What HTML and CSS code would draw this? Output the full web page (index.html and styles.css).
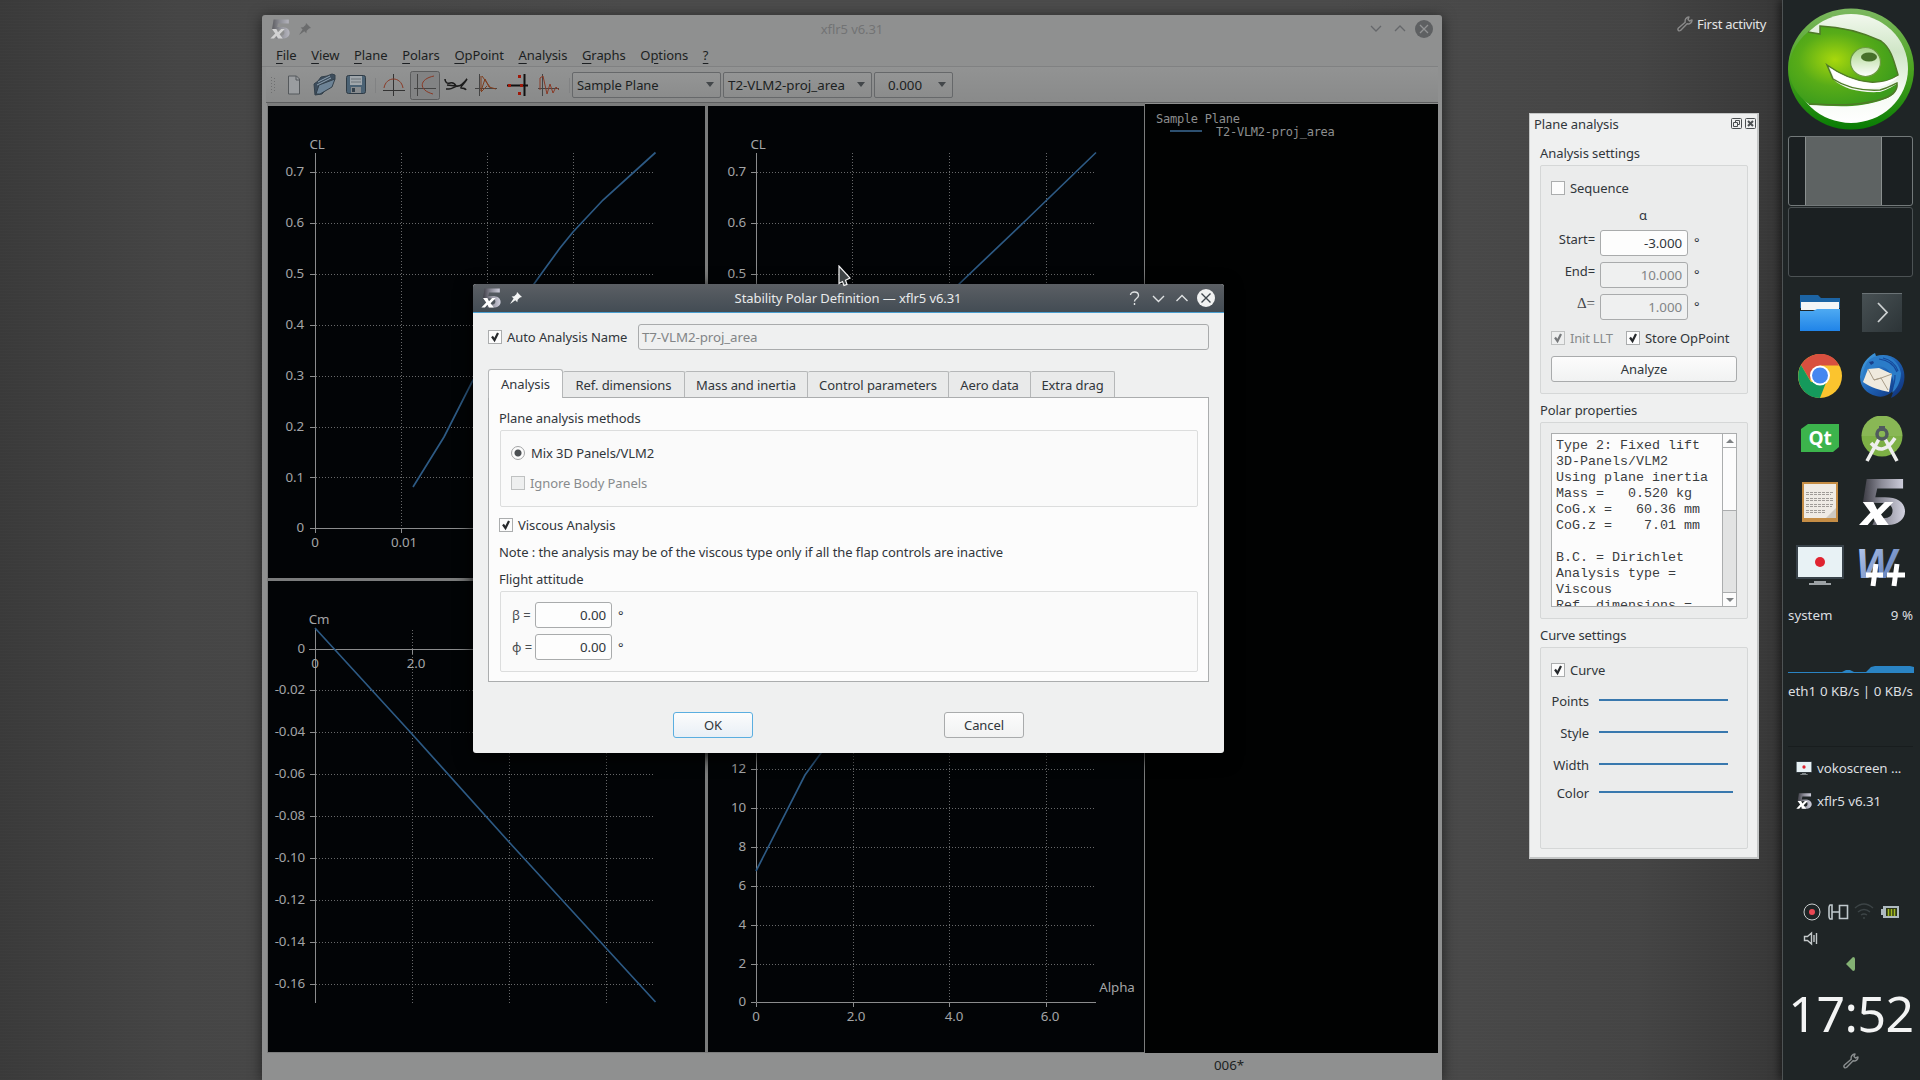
FILE: index.html
```html
<!DOCTYPE html>
<html lang="en">
<head>
<meta charset="utf-8">
<title>xflr5 v6.31</title>
<link rel="stylesheet" href="styles.css">
</head>
<body>
<svg class="defs" aria-hidden="true">
  <defs>
    <linearGradient id="g5" x1="0" y1="0" x2="1" y2="0"><stop offset="0" stop-color="#3c3c44"/><stop offset=".45" stop-color="#8c8c98"/><stop offset="1" stop-color="#d2d2e0"/></linearGradient>
    <linearGradient id="gW" x1="0" y1="0" x2="1" y2="1"><stop offset="0" stop-color="#c3d3f2"/><stop offset="1" stop-color="#4a6cae"/></linearGradient>
    <linearGradient id="gFolder" x1="0" y1="0" x2="0" y2="1"><stop offset="0" stop-color="#4eaaf2"/><stop offset="1" stop-color="#2084e8"/></linearGradient>
    <linearGradient id="gTerm" x1="0" y1="0" x2="1" y2="1"><stop offset="0" stop-color="#485154"/><stop offset="1" stop-color="#2c3437"/></linearGradient>
    <linearGradient id="gBird" x1="0" y1="0" x2="1" y2="1"><stop offset="0" stop-color="#49a9e6"/><stop offset=".5" stop-color="#1f62b4"/><stop offset="1" stop-color="#0d2c74"/></linearGradient>
    <radialGradient id="gLogo" cx=".42" cy=".42" r=".6"><stop offset="0" stop-color="#a8d80c"/><stop offset=".55" stop-color="#58ac18"/><stop offset="1" stop-color="#3c9c1c"/></radialGradient>
    <linearGradient id="gRim" x1="0" y1="0" x2="0" y2="1"><stop offset="0" stop-color="#7cb860"/><stop offset=".5" stop-color="#4ca420"/><stop offset="1" stop-color="#087c04"/></linearGradient>
    <linearGradient id="gInner" x1="0" y1="0" x2="0" y2="1"><stop offset="0" stop-color="#f2f8ee"/><stop offset=".35" stop-color="#cfe6c6"/><stop offset=".7" stop-color="#f4faf2"/><stop offset="1" stop-color="#fff"/></linearGradient>
    <linearGradient id="gEye" x1="0" y1="0" x2="0" y2="1"><stop offset="0" stop-color="#a8d488"/><stop offset="1" stop-color="#fff"/></linearGradient>
    <symbol id="five" viewBox="0 0 48 50">
      <path fill="url(#g5)" d="M8 1h38v10H19l-2 9h10c13 0 21 5 21 15 0 8-7 14-18 14H14l3-7h8c7 0 10-3 10-8s-4-8-12-8H4z"/>
      <path fill="#fff" d="M4 25h11l4 8 8-8h9L23 38l8 11H19l-4-7-6 7H0l12-13z"/>
    </symbol>
    <symbol id="pin" viewBox="0 0 12 12"><path d="M7 0l5 5-2 .4-2.300 2.300-.4 2.500-2-2L.5 11.700l-.2-.2L3.600 6.600l-2-2L4.200 4.200 6.600 2z"/></symbol>
    <symbol id="wrench" viewBox="0 0 16 16"><path fill="none" stroke="currentColor" stroke-width="1.400" stroke-linejoin="round" d="M8.200 6.200c-.5-2.600 1-5 3.800-5.200L11 3.500 12.500 5 15 4c.2 2.800-2.300 4.400-4.900 3.800L3.500 14.500c-1.700 1-3.300-.6-2.300-2.200z"/></symbol>
    <symbol id="screen" viewBox="0 0 48 40"><path fill="#39434a" d="M0 0h48v34H0z"/><path fill="#e8f2f5" d="M2 2h44v30H2z"/><circle cx="24" cy="17" r="5" fill="#e02430"/><path fill="#9ca2a5" d="M18 36h12v2h5v2H13v-2h5z"/></symbol>
    <symbol id="tick" viewBox="0 0 14 14"><path fill="none" stroke="currentColor" stroke-width="2.200" d="M4 6.500l2.500 3.500L10 3"/></symbol>
  </defs>
</svg>

<main class="desktop">
  <div class="activity"><svg width="16" height="16"><use href="#wrench"/></svg>First activity</div>

  <section class="window">
    <header class="titlebar">
      <svg class="app" width="20" height="20"><use href="#five"/></svg>
      <svg class="pin" width="12" height="12"><use href="#pin"/></svg>
      <span class="title">xflr5 v6.31</span>
      <svg class="ctl" width="46" height="20" viewBox="0 0 46 20"><path d="M3 7l5 5 5-5M27 12l5-5 5 5"/></svg>
      <svg width="20" height="20" viewBox="0 0 20 20"><circle cx="10" cy="10" r="9" fill="#5e6062"/><path d="M6 6l8 8M14 6l-8 8" stroke="#929394" stroke-width="1.300"/></svg>
    </header>
    <nav class="menu">
      <span><u>F</u>ile</span><span><u>V</u>iew</span><span><u>P</u>lane</span><span><u>P</u>olars</span><span><u>O</u>pPoint</span><span><u>A</u>nalysis</span><span><u>G</u>raphs</span><span>O<u>p</u>tions</span><span><u>?</u></span>
    </nav>
    <div class="toolbar">
      <svg class="tools" width="298" height="30" viewBox="0 0 298 30">
        <g fill="#6f7071"><path d="M3 7h1v1H3zM3 10h1v1H3zM3 13h1v1H3zM3 16h1v1H3zM3 19h1v1H3zM3 22h1v1H3zM6 8h1v1H6zM6 11h1v1H6zM6 14h1v1H6zM6 17h1v1H6zM6 20h1v1H6z"/></g>
        <path d="M20.500 6h8l3 3v15h-11z" fill="#9a9da0" stroke="#55595c"/><path d="M28 6v4h4" fill="none" stroke="#55595c"/>
        <path d="M46 14l4-3 3-4 6-1 5-2 3 1v4L54 24l-7 1z" fill="#3d4d5c" stroke="#33404b"/><path d="M51 15l16-6-3 8-12 7-4 0z" fill="#6d8396" stroke="#33404b"/><path d="M50 12l12-6M49 15l14-7" stroke="#8fa2b2"/>
        <rect x="78.500" y="5.500" width="19" height="18" rx="2" fill="#4b6274" stroke="#2f3b45"/><path fill="#9fa6ab" d="M82 6h12v9H82z"/><path d="M83 9h10M83 12h10" stroke="#6b7278"/><path fill="#878b8e" d="M83 17h10v6H83z"/><path fill="#33404b" d="M84 18h3v4h-3z"/>
        <path d="M107.500 8v15M301.500 8v15" stroke="#818283"/>
        <path d="M115 20.500h22M125.500 4v22" stroke="#333"/><path d="M116 18c2-12 17-12 19 0" fill="none" stroke="#8a3a26"/>
        <rect x="142.500" y="1.500" width="29" height="28" rx="2" fill="#828384" stroke="#5b5c5d"/>
        <path d="M146 18.500h22M149.500 4v22" stroke="#444"/><path d="M166 6c-15 3-16 14-1 18" fill="none" stroke="#8a3a26"/>
        <path d="M177 9c0 3 2 5 5 4s5 1 6 3c4 1 8-3 11-7-3 5-7 8-6 9 2 0 4 0 5 2M179 15l9 1M181 19c3 0 5-2 8-3M178 19h5" fill="none" stroke="#1c1c1c" stroke-width="1.600"/>
        <path d="M207 18.500h22M211.500 4v22" stroke="#444"/><path d="M213 6v15l4-12 4 8 7 2M214 6l8 11M213 22l6-6" fill="none" stroke="#7e3c1c"/>
        <path d="M239 15.500h21" stroke="#111" stroke-width="2"/><path d="M256.500 4v22" stroke="#111" stroke-width="2"/><path d="M250 5h3v3h-3zM250 22h3v3h-3zM240 14h3v3h-3zM252 14h3v3h-3z" fill="#a01808"/>
        <path d="M270 18.500h21M274.500 4v22" stroke="#444"/><path d="M272 20V8l3-2 4 18 3-10 3 9 3-6 3 3" fill="none" stroke="#8a3a26"/>
      </svg>
      <div class="combo plane">Sample Plane<i></i></div>
      <div class="combo polar">T2-VLM2-proj_area<i></i></div>
      <div class="combo opp">0.000<i></i></div>
    </div>
    <div class="views">
      <div class="graphs">
        <svg class="graph" viewBox="268 106 437 472">
          <path class="grid" d="M401.500 153V528M487.500 153V528M573.500 153V528M316 172.500H655M316 223.500H655M316 274.500H655M316 325.500H655M316 376.500H655M316 427.500H655M316 477.500H655"/>
          <path class="axis" d="M315.500 153V528.500H655M310 172.500h5M310 223.500h5M310 274.500h5M310 325.500h5M310 376.500h5M310 427.500h5M310 477.500h5M310 528.500h5M315.500 528v5M401.500 528v5"/>
          <path class="curve" d="M413 487l31-50 28-55 62-98 10-14 16-22 13-16 30-32 52.500-47.500"/>
          <g class="end"><text x="304" y="176">0.7</text><text x="304" y="227">0.6</text><text x="304" y="278">0.5</text><text x="304" y="329">0.4</text><text x="304" y="380">0.3</text><text x="304" y="431">0.2</text><text x="304" y="482">0.1</text><text x="304" y="532">0</text></g>
          <g class="mid"><text x="317" y="149">CL</text><text x="315" y="547">0</text><text x="404" y="547">0.01</text></g>
        </svg>
        <svg class="graph" viewBox="708 106 436 472">
          <path class="grid" d="M852.500 153V528M949.500 153V528M1046.500 153V528M757 172.500H1096M757 223.500H1096M757 274.500H1096"/>
          <path class="axis" d="M756.500 153V528.500H1096M751 172.500h5M751 223.500h5M751 274.500h5"/>
          <path class="curve" d="M900 341L957 286 1022 224 1096 152.500"/>
          <g class="end"><text x="746" y="176">0.7</text><text x="746" y="227">0.6</text><text x="746" y="278">0.5</text></g>
          <g class="mid"><text x="758" y="149">CL</text></g>
        </svg>
        <svg class="graph" viewBox="268 581 437 471">
          <path class="grid" d="M412.500 630V1003M509.500 630V1003M606.500 630V1003M316 690.500H655M316 732.500H655M316 774.500H655M316 816.500H655M316 858.500H655M316 900.500H655M316 942.500H655M316 984.500H655"/>
          <path class="axis" d="M315.500 628V1003M309 649.500H655M310 690.500h5M310 732.500h5M310 774.500h5M310 816.500h5M310 858.500h5M310 900.500h5M310 942.500h5M310 984.500h5M412.500 649v5"/>
          <path class="curve" d="M315 628L412 734 509 842 606 948 655.500 1002"/>
          <g class="end"><text x="305" y="653">0</text><text x="305" y="694">-0.02</text><text x="305" y="736">-0.04</text><text x="305" y="778">-0.06</text><text x="305" y="820">-0.08</text><text x="305" y="862">-0.10</text><text x="305" y="904">-0.12</text><text x="305" y="946">-0.14</text><text x="305" y="988">-0.16</text></g>
          <g class="mid"><text x="319" y="624">Cm</text><text x="315" y="668">0</text><text x="416" y="668">2.0</text></g>
        </svg>
        <svg class="graph" viewBox="708 581 436 471">
          <path class="grid" d="M853.500 630V1002M949.500 630V1002M1046.500 630V1002M757 769.500H1096M757 808.500H1096M757 847.500H1096M757 886.500H1096M757 925.500H1096M757 964.500H1096"/>
          <path class="axis" d="M756.500 630V1002.500H1096M751 769.500h5M751 808.500h5M751 847.500h5M751 886.500h5M751 925.500h5M751 964.500h5M751 1002.500h5M756.500 1003v4M853.500 1003v4M949.500 1003v4M1046.500 1003v4"/>
          <path class="curve" d="M756 871L805 775 821 753 841 726"/>
          <g class="end"><text x="746" y="773">12</text><text x="746" y="812">10</text><text x="746" y="851">8</text><text x="746" y="890">6</text><text x="746" y="929">4</text><text x="746" y="968">2</text><text x="746" y="1006">0</text></g>
          <g class="mid"><text x="756" y="1021">0</text><text x="856" y="1021">2.0</text><text x="954" y="1021">4.0</text><text x="1050" y="1021">6.0</text><text x="1117" y="992">Alpha</text></g>
        </svg>
      </div>
      <div class="legend">
        <div>Sample Plane</div>
        <div class="entry"><b></b>T2-VLM2-proj_area</div>
      </div>
    </div>
    <footer class="status">006*</footer>
  </section>

  <section class="dialog">
    <header class="dtitle">
      <svg width="20" height="20"><use href="#five"/></svg>
      <svg class="pin" width="12" height="12"><use href="#pin"/></svg>
      <span class="title">Stability Polar Definition — xflr5 v6.31</span>
      <svg class="dctl" width="92" height="20" viewBox="1124 288 92 20"><path d="M1130.500 295c0-4 8-4 8 .5 0 3-4 3-4 6m0 1.500v2M1153 296l5.500 5.500 5.500-5.500M1176.500 301l5.500-5.500 5.500 5.500"/><circle cx="1206" cy="298" r="9"/><path class="x" d="M1201.500 293.500l9 9M1210.500 293.500l-9 9"/></svg>
    </header>
    <div class="dbody">
      <div class="namerow"><span class="chk"><svg><use href="#tick"/></svg></span><label>Auto Analysis Name</label><div class="field off name">T7-VLM2-proj_area</div></div>
      <div class="tabs"><span class="tab on">Analysis</span><span class="tab t2">Ref. dimensions</span><span class="tab t3">Mass and inertia</span><span class="tab t4">Control parameters</span><span class="tab t5">Aero data</span><span class="tab t6">Extra drag</span></div>
      <div class="pane">
        <p class="cap">Plane analysis methods</p>
        <div class="group methods">
          <div class="opt"><span class="radio"></span>Mix 3D Panels/VLM2</div>
          <div class="opt dim"><span class="chk off"></span>Ignore Body Panels</div>
        </div>
        <div class="opt viscous"><span class="chk"><svg><use href="#tick"/></svg></span>Viscous Analysis</div>
        <p class="note">Note : the analysis may be of the viscous type only if all the flap controls are inactive</p>
        <p class="cap">Flight attitude</p>
        <div class="group attitude">
          <div class="angle"><label>β =</label><div class="field">0.00</div>°</div>
          <div class="angle"><label>ϕ =</label><div class="field">0.00</div>°</div>
        </div>
      </div>
      <div class="buttons"><div class="btn focus">OK</div><div class="btn">Cancel</div></div>
    </div>
  </section>

  <aside class="dock">
    <header class="dockhead">Plane analysis
      <svg width="26" height="12" viewBox="0 0 26 12"><path d="M1.500 .5h8q1 0 1 1v8q0 1-1 1h-8q-1 0-1-1v-8q0-1 1-1zM15.500 .5h8q1 0 1 1v8q0 1-1 1h-8q-1 0-1-1v-8q0-1 1-1zM4.500 4.500v-2h4v4h-2M2.500 4.500h4v4h-4z"/><path class="x" d="M17 3l5 5M22 3l-5 5"/></svg>
    </header>
    <h4 class="h1">Analysis settings</h4>
    <div class="box settings">
      <div class="opt"><span class="chk"></span>Sequence</div>
      <div class="alpha">α</div>
      <div class="row"><label>Start=</label><div class="field">-3.000</div><span>°</span></div>
      <div class="row"><label>End=</label><div class="field off">10.000</div><span>°</span></div>
      <div class="row"><label class="delta">Δ=</label><div class="field off">1.000</div><span>°</span></div>
      <div class="opt two"><span class="chk off"><svg><use href="#tick"/></svg></span><span class="dim llt">Init LLT</span><span class="chk"><svg><use href="#tick"/></svg></span>Store OpPoint</div>
      <div class="btn">Analyze</div>
    </div>
    <h4 class="h2">Polar properties</h4>
    <div class="box props">
      <div class="textview">
        <pre>Type 2: Fixed lift
3D-Panels/VLM2
Using plane inertia
Mass =   0.520 kg
CoG.x =   60.36 mm
CoG.z =    7.01 mm

B.C. = Dirichlet
Analysis type =
Viscous
Ref. dimensions =</pre>
        <div class="scroll"><span class="up"></span><span class="thumb"></span><span class="trough"></span><span class="down"></span></div>
      </div>
    </div>
    <h4 class="h3">Curve settings</h4>
    <div class="box curvebox">
      <div class="opt"><span class="chk"><svg><use href="#tick"/></svg></span>Curve</div>
      <div class="line"><label>Points</label><b></b></div>
      <div class="line"><label>Style</label><b></b></div>
      <div class="line"><label>Width</label><b></b></div>
      <div class="line last"><label>Color</label><b></b></div>
    </div>
  </aside>

  <svg class="cursor" width="14" height="22" viewBox="0 0 14 22"><path d="M1 1v17.500l3.500-2 1.500 4 3-1.200-1.500-4L12 13z" fill="#3f4446" stroke="#f4f4f4" stroke-width="1.200"/></svg>
</main>

<aside class="panel">
  <svg class="logo" width="126" height="122" viewBox="0 0 126 122">
    <ellipse cx="63" cy="61" rx="63" ry="60.500" fill="url(#gRim)"/>
    <ellipse cx="63" cy="60.500" rx="57" ry="54.500" fill="url(#gInner)"/>
    <path d="M20 24L32 26V18c26 1 46 8 61 15 10 7 13 20 17 34-12 10-40 12-71-10l6 14c10 10 26 14 47 13 8-2 14-7 17-8 0 8-4 12-12 15-26 10-50 7-75 6C-5 78-6 46 20 24z" fill="url(#gLogo)"/>
    <path d="M20 24L32 26V18c26 1 46 8 61 15 10 7 13 20 17 34-12 10-40 12-71-10l6 14c12 8 28 12 47 11 8-2 14-6 17-7 1 8-4 12-12 15-26 9-50 7-76 6" fill="none" stroke="#4f7a28" stroke-width="1.500"/>
    <path d="M42 60l4 10c18 11 41 16 62 1l2-3C90 80 66 76 42 60z" fill="#fff"/>
    <ellipse cx="77.500" cy="54" rx="15" ry="14.500" fill="url(#gEye)" stroke="#6c9c40" stroke-width="1.200"/><ellipse cx="81" cy="49" rx="8" ry="4.500" fill="#47702a"/>
  </svg>
  <div class="pager on"><span></span></div>
  <div class="pager"></div>
  <div class="launch">
    <svg width="40" height="36" viewBox="0 0 40 36"><path fill="#1c64a4" d="M0 0h18l3 3h19v10H0z"/><path fill="#f4f6f7" d="M1 7h38v8H1z"/><path fill="url(#gFolder)" d="M0 16h13l4-2h23v22H0z"/></svg>
    <svg width="40" height="40" viewBox="0 0 40 40"><path fill="url(#gTerm)" d="M0 0h40v39H0z"/><path d="M0 .5h40" stroke="#6b7376"/><path d="M16 10l9 9.500L16 29" fill="none" stroke="#cdd1d2" stroke-width="1.800"/></svg>
    <svg width="44" height="44" viewBox="0 0 44 44"><circle cx="22" cy="22" r="22" fill="#fbc42e"/><path fill="#d8503f" d="M3 11C12-4 34-4 41 11.500H22L12 26z"/><path fill="#159a5c" d="M3 11l10 17 16-2-7 18C5 44-5 26 3 11z"/><circle cx="22" cy="21.500" r="10" fill="#fff"/><circle cx="22" cy="21.500" r="8" fill="#4587f0"/></svg>
    <svg width="46" height="46" viewBox="0 0 46 46"><path fill="url(#gBird)" d="M1 24C2 10 9 4 16 0l1 3c14-4 26 4 28 16 2 12-3 22-13 26l3-8c-6 6-12 8-18 6C8 41 1 34 1 24z"/><path fill="#2b7cc8" d="M9 8C18-1 38 1 42 20c0 8-4 16-9 20 3-8 2-14-1-18-2-6-8-9-14-9l-7 4c-2 2-5 3-7 7 0-6 2-12 5-16z"/><path fill="#efeade" d="M9 16l11-1 13 6-3 18C21 37 12 35 4 29z"/><path d="M9 16l6 11 7-2 11-4M15 27l7-2 7 12" fill="none" stroke="#a89c88"/><path d="M20 6c8 1 15 5 18 13M24 5c8 2 13 7 15 13M36 22c0 6-1 10-3 13" fill="none" stroke="#16489a" stroke-width="1.200"/><path fill="#1a3f88" d="M10 9l4-1 1 2-3 2z"/></svg>
    <svg width="38" height="29" viewBox="0 0 38 29"><path fill="#3cb44c" d="M7 0h31v23l-6 5H0V5z"/><text x="19" y="21" class="qt">Qt</text></svg>
    <svg width="42" height="46" viewBox="0 0 42 46"><circle cx="21" cy="20" r="20.500" fill="#7db045"/><path fill="#a1c772" d="M.5 20a20.500 20.500 0 0141 0z" opacity=".35"/><path d="M18 23L6 45M24 23l12 22M10 27q12 14 24-5" fill="none" stroke="#eee" stroke-width="3.600"/><circle cx="21" cy="18" r="5" fill="none" stroke="#505a5e" stroke-width="3.500"/><path fill="#505a5e" d="M18 10h6v5h-6z"/></svg>
    <svg width="36" height="40" viewBox="0 0 36 40"><path fill="#c58d45" d="M0 0h36v40H0z"/><path fill="#efebe5" d="M2 2h32v34H2z"/><path d="M4 10.500h28M4 12.500h25M4 16.500h28M4 18.500h27M4 22.500h28M4 24.500h26M4 28.500h20M4 30.500h20" stroke="#a09c98" stroke-dasharray="3 1"/><path fill="#cfcac2" d="M24 36l10-10v10z"/></svg>
    <svg width="46" height="48"><use href="#five"/></svg>
    <svg width="48" height="40"><use href="#screen"/></svg>
    <svg class="wpp" width="48" height="46" viewBox="0 0 48 46"><text x="-2" y="36" class="w">W</text><path d="M18 22l-3 22M8 33h17M39 22l-3 22M29 33h18" stroke="#fff" stroke-width="5"/></svg>
  </div>
  <div class="stat cpu"><span>system</span><span>9 %</span></div>
  <svg class="spark" width="126" height="10" viewBox="0 0 126 10"><path fill="#2a84c4" d="M0 8h54l4-2h4l4 2h12l5-5 4-1h35l4 1v6H0z"/></svg>
  <div class="stat net"><span>eth1</span><span>0 KB/s | 0 KB/s</span></div>
  <div class="tasks">
    <div><svg width="16" height="14"><use href="#screen"/></svg>vokoscreen ...</div>
    <div><svg width="16" height="16"><use href="#five"/></svg>xflr5 v6.31</div>
  </div>
  <svg class="tray" width="138" height="80" viewBox="1782 900 138 80">
    <circle cx="1812" cy="913" r="8" fill="none" stroke="#c9cdce"/><circle cx="1812" cy="913" r="3" fill="#ec4854"/>
    <path d="M1830 906h2v14h-2q-1-1-1-3v-8q0-2 1-3zM1832 913h7M1839.500 906.500h8v13h-8z" fill="none" stroke="#bfc8cc" stroke-width="1.600"/>
    <path d="M1855 909q9-8 18 0M1858 913q6-5 12 0M1861 916q3-2 6 0M1863 919h2" fill="none" stroke="#3c4446" stroke-width="1.500"/>
    <path fill="#aebac0" d="M1881 910h2v-3h16v12h-16v-3h-2z"/><path fill="#2a3416" d="M1886 909h11v8h-11z"/><path d="M1888.500 910v7M1891.500 910v7M1894.500 910v7" stroke="#a2b822" stroke-width="1.600"/>
    <path d="M1804.500 937.500h3l4-3.500v11l-4-3.500h-3zM1814 936v7M1816.500 934v11" fill="none" stroke="#c5cacb" stroke-width="1.400"/>
    <path fill="#84b274" d="M1846 965l7-7q2 0 2 2v10q0 2-2 2z"/>
  </svg>
  <div class="clock">17:52</div>
  <svg class="cfg" width="16" height="16"><use href="#wrench"/></svg>
</aside>
</body>
</html>
```
FILE: styles.css
```css
* { box-sizing: border-box; }
body { margin: 0; width: 1920px; height: 1080px; overflow: hidden; display: grid; grid-template-columns: 1782px 138px; font: 13px/18px "Noto Sans", "Liberation Sans", sans-serif; letter-spacing: -.08px; color: #31363b; }
svg { display: block; flex: none; }
p, h4, pre { margin: 0; font-weight: 400; font-size: inherit; }
.defs { position: absolute; width: 0; height: 0; }
.desktop { position: relative; height: 1080px; overflow: hidden; background:
  repeating-linear-gradient(0deg, rgba(255,255,255,.012) 0 1px, transparent 1px 3px),
  linear-gradient(90deg, #3a3a3a 0, #454545 10%, #4b4b4b 35%, #4b4b4b 75%, #444 92%, #373737 100%); }
.activity { position: absolute; left: 1677px; top: 15px; display: flex; align-items: center; gap: 4px; color: #e4e5e6; white-space: nowrap; letter-spacing: -.25px; }
.activity svg { color: #8a8a8a; }
.cursor { position: absolute; left: 838px; top: 265px; }

/* main window */
.window { position: absolute; left: 262px; top: 15px; width: 1180px; height: 1065px; border-radius: 3px 3px 0 0; background: #8f9090; box-shadow: 0 2px 14px rgba(0,0,0,.55); display: flex; flex-direction: column; color: #1c1f22; }
.titlebar { height: 30px; padding: 0 8px 2px 8px; display: flex; align-items: center; }
.titlebar .app { opacity: .6; }
.titlebar .pin { margin-left: 9px; fill: #6b6c6d; }
.title { flex: 1; text-align: center; white-space: nowrap; }
.titlebar .title { color: #727374; padding-left: 25px; }
.titlebar .ctl { fill: none; stroke: #65676a; stroke-width: 1.300; }
.menu { height: 22px; padding: 0 14px 2px; display: flex; align-items: center; gap: 14.700px; border-bottom: 1px solid #808182; margin-right: 4px; }
.menu u { text-underline-offset: 3px; text-decoration-thickness: 1px; }
.toolbar { height: 36px; margin: 0 4px 0 4px; padding-left: 2px; display: flex; align-items: center; gap: 2px; border-bottom: 1px solid #5d5e5f; background: linear-gradient(#929393, #898a8a); }
.tools { width: 298px; overflow: visible; }
.combo { height: 26px; border: 1px solid #66686a; border-radius: 2px; display: flex; align-items: center; justify-content: space-between; padding: 0 6px 0 4px; background: linear-gradient(#949595, #8b8c8c); white-space: nowrap; }
.combo i { border: 4px solid transparent; border-top: 5px solid #43474a; border-bottom: 0; }
.combo.plane { width: 149px; margin-left: 4px; }
.combo.polar { width: 149px; font-size: 13.33px; letter-spacing: 0; }
.combo.opp { width: 79px; padding-left: 13px; font-size: 13.33px; letter-spacing: 0; }
.views { height: 950px; padding: 0 4px 0 5px; display: grid; grid-template-columns: 878px 293px; }
.graphs { background: #7b7c7c; padding: 3px 1px 1px; display: grid; grid-template-columns: 437px 436px; grid-template-rows: 472px 471px; gap: 3px; }
.graph { width: 100%; height: 100%; background: #020406; }
.graph text { font-size: 13.33px; fill: #a4a5a6; }
.end { text-anchor: end; }
.mid { text-anchor: middle; }
.grid, .axis, .curve { fill: none; }
.grid { stroke: #68696a; stroke-dasharray: 1 2; }
.axis { stroke: #8b8c8d; }
.curve { stroke: #2d5a84; stroke-width: 1.700; }
.legend { margin-top: 1px; background: #010202; padding: 9px 11px; font: 12px/13px "DejaVu Sans Mono", "Liberation Mono", monospace; letter-spacing: -.25px; color: #8d8e8f; }
.entry { display: flex; padding-left: 14px; gap: 14px; }
.entry b { width: 32px; height: 2px; margin-top: 4px; background: #2d5070; }
.status { flex: 1; padding: 3px 0 0 952px; font-size: 13.33px; letter-spacing: 0; }

/* dialog */
.dialog { position: absolute; left: 473px; top: 284px; width: 751px; height: 469px; border-radius: 3px; background: #eff0f0; box-shadow: 0 4px 18px #000; }
.dtitle { height: 29px; padding: 0 8px; border-bottom: 1px solid #4a9fd0; border-radius: 3px 3px 0 0; background: linear-gradient(#5b5f64, #434c54); display: flex; align-items: center; color: #e8eaeb; }
.dtitle .pin { margin-left: 9px; fill: #f4f5f5; }
.dtitle .title { padding-left: 50px; }
.dctl { fill: none; stroke: #dfe2e3; stroke-width: 1.400; }
.dctl circle { fill: #f1f2f2; stroke: none; }
.dctl .x { stroke: #3f474e; }
.dbody { padding: 11px 15px 0; }
.namerow { height: 26px; display: flex; align-items: center; }
.namerow label { width: 131px; margin-left: 5px; }
.chk { flex: none; width: 14px; height: 14px; border: 1px solid #abadae; background: #fcfcfc; }
.chk svg { width: 14px; height: 14px; margin: -1px; color: #26292c; }
.chk.off { background: #eeefef; border-color: #bfc1c1; }
.chk.off svg { color: #76797b; }
.dim { color: #888b8d; }
.field { height: 26px; border: 1px solid #a9abac; border-radius: 3px; background: #fdfdfd; padding: 0 5px; font-size: 13.33px; line-height: 25px; text-align: right; color: #31363b; }
.field.off { background: #eff0f0; color: #828587; }
.field.name { flex: 1; text-align: left; padding-left: 3px; }
.tabs { height: 28px; margin-top: 19px; display: flex; align-items: flex-end; position: relative; }
.tab { height: 26px; border: 1px solid #b5b7b8; border-width: 1px 1px 0 0; border-radius: 2px 2px 0 0; background: #e9eaea; text-align: center; line-height: 27px; white-space: nowrap; }
.tab.on { width: 75px; height: 29px; margin-bottom: -1px; background: #fcfcfc; border-left-width: 1px; border-radius: 3px 3px 0 0; line-height: 29px; }
.t2 { width: 122px; } .t3 { width: 123px; } .t4 { width: 141px; } .t5 { width: 82px; } .t6 { width: 84px; }
.pane { height: 285px; border: 1px solid #abadae; background: #fcfcfc; padding: 11px 10px 0; }
.group { border: 1px solid #dcdddd; border-radius: 2px; background: #fafafa; margin-left: 1px; }
.opt { display: flex; align-items: center; height: 18px; gap: 5px; }
.methods { height: 77px; margin-top: 3px; padding: 13px 10px; display: flex; flex-direction: column; gap: 12px; }
.radio { width: 14px; height: 14px; border: 1px solid #a3a5a6; border-radius: 50%; background: radial-gradient(circle, #4c5053 0 3px, #fcfcfc 4px); margin-right: 1px; }
.viscous { margin-top: 9px; }
.note { margin: 9px 0; }
.attitude { height: 81px; margin-top: 3px; padding: 10px 11px; display: flex; flex-direction: column; gap: 6px; }
.angle { display: flex; align-items: center; }
.angle label { width: 23px; color: #4a4e52; white-space: nowrap; }
.angle .field { width: 77px; margin-right: 6px; }
.buttons { display: flex; padding: 30px 0 0 185px; gap: 191px; }
.btn { width: 80px; height: 26px; border: 1px solid #a9abac; border-radius: 3px; background: linear-gradient(#fcfcfc, #f1f2f2); text-align: center; line-height: 25px; }
.btn.focus { border-color: #5aaee0; background: linear-gradient(#fcfcfc, #e8eff6); }

/* analysis dock */
.dock { position: absolute; left: 1529px; top: 113px; width: 230px; height: 746px; background: #eff0f0; border: 1px solid #c4c6c6; border-width: 1px 2px 2px 1px; padding: 0 9px 0 10px; }
.dockhead { height: 22px; margin: 0 -9px 0 -6px; padding-top: 1px; display: flex; justify-content: space-between; }
.dockhead svg { margin-top: 3px; fill: none; stroke: #4a4e51; }
.dockhead .x { stroke-width: 2; }
.h1 { margin-top: 8px; } .h2 { margin-top: 7px; } .h3 { margin-top: 7px; }
.box { border: 1px solid #d5d7d7; border-radius: 2px; background: #ebecec; padding: 10px; }
.settings { height: 229px; margin-top: 3px; padding-top: 13px; }
.alpha { margin: 9px 0 6px; padding-left: 88px; height: 18px; }
.row { display: flex; height: 32px; }
.row label { width: 44px; text-align: right; margin-right: 5px; }
.row .delta { font: 15px/18px "Liberation Serif", serif; color: #45484b; }
.row .field { width: 88px; }
.row span { margin-left: 6px; padding-top: 3px; }
.two { margin-top: 3px; height: 18px; }
.two .llt { width: 51px; white-space: nowrap; letter-spacing: -.2px; }
.settings .btn { width: 186px; margin-top: 9px; }
.props { height: 197px; margin-top: 3px; }
.textview { height: 174px; width: 186px; border: 1px solid #abadae; background: #fcfcfc; display: grid; grid-template-columns: 170px 14px; overflow: hidden; }
pre { padding: 4px 0 0 4px; font: 13.33px/16px "Liberation Mono", "Courier New", monospace; letter-spacing: 0; color: #3a3d40; overflow: hidden; }
.scroll { border-left: 1px solid #abadae; display: flex; flex-direction: column; }
.up, .down { height: 14px; display: flex; justify-content: center; align-items: center; }
.up { border-bottom: 1px solid #abadae; }
.down { border-top: 1px solid #abadae; }
.up::after, .down::after { content: ""; border: 4px solid transparent; border-bottom: 4px solid #7e8183; border-top: 0; }
.down::after { border-top: 4px solid #7e8183; border-bottom: 0; }
.thumb { height: 63px; border-bottom: 1px solid #abadae; }
.trough { flex: 1; background: #e2e3e3; }
.curvebox { height: 202px; margin-top: 3px; padding-top: 13px; }
.line { height: 18px; margin-top: 14px; display: flex; align-items: center; }
.curvebox .opt + .line { margin-top: 13px; }
.line.last { margin-top: 10px; }
.line label { width: 38px; text-align: right; }
.line b { width: 129px; height: 2px; margin-left: 10px; margin-top: -2px; background: #3878ae; }
.line.last b { width: 134px; }

/* side panel */
.panel { height: 1080px; background: #1f2526; border-left: 1px solid #4e5354; color: #dcdfe0; padding: 8px 7px 0 5px; display: flex; flex-direction: column; align-items: flex-start; box-shadow: -3px 0 8px rgba(0,0,0,.5); z-index: 1; overflow: hidden; font-size: 13.33px; }
.pager { flex: none; width: 125px; height: 70px; margin-top: 1px; border: 1px solid #4c5254; border-radius: 3px; background: #1b2022; }
.pager.on { margin-top: 6px; border-color: #73797a; }
.pager span { display: block; width: 77px; height: 68px; margin-left: 16px; background: #5e6363; border: solid #8a8f8f; border-width: 0 1px; }
.launch { width: 125px; height: 317px; margin-top: 4px; display: grid; grid-template-columns: 63px 62px; grid-auto-rows: 63px; justify-items: center; align-items: center; }
.qt { font: 700 19px "Open Sans", "Noto Sans", sans-serif; fill: #fff; text-anchor: middle; }
.wpp { overflow: visible; }
.w { font: italic 700 43px "Liberation Sans", sans-serif; fill: url(#gW); }
.stat { width: 125px; display: flex; justify-content: space-between; white-space: nowrap; letter-spacing: 0; }
.cpu { margin-top: 8px; }
.spark { margin-top: 40px; }
.net { margin-top: 8px; }
.tasks { width: 125px; margin-top: 46px; padding-top: 12px; border-top: 1px solid #181d1e; display: flex; flex-direction: column; gap: 15px; white-space: nowrap; }
.tasks div { display: flex; align-items: center; gap: 5px; padding-left: 8px; height: 18px; }
.tray { margin: 89px 0 0 -6px; }
.clock { width: 126px; margin-top: 6px; text-align: center; font-size: 50px; line-height: 56px; color: #f3f4f4; letter-spacing: -.5px; }
.cfg { margin: 12px 0 0 55px; color: #8b8f90; }
```
